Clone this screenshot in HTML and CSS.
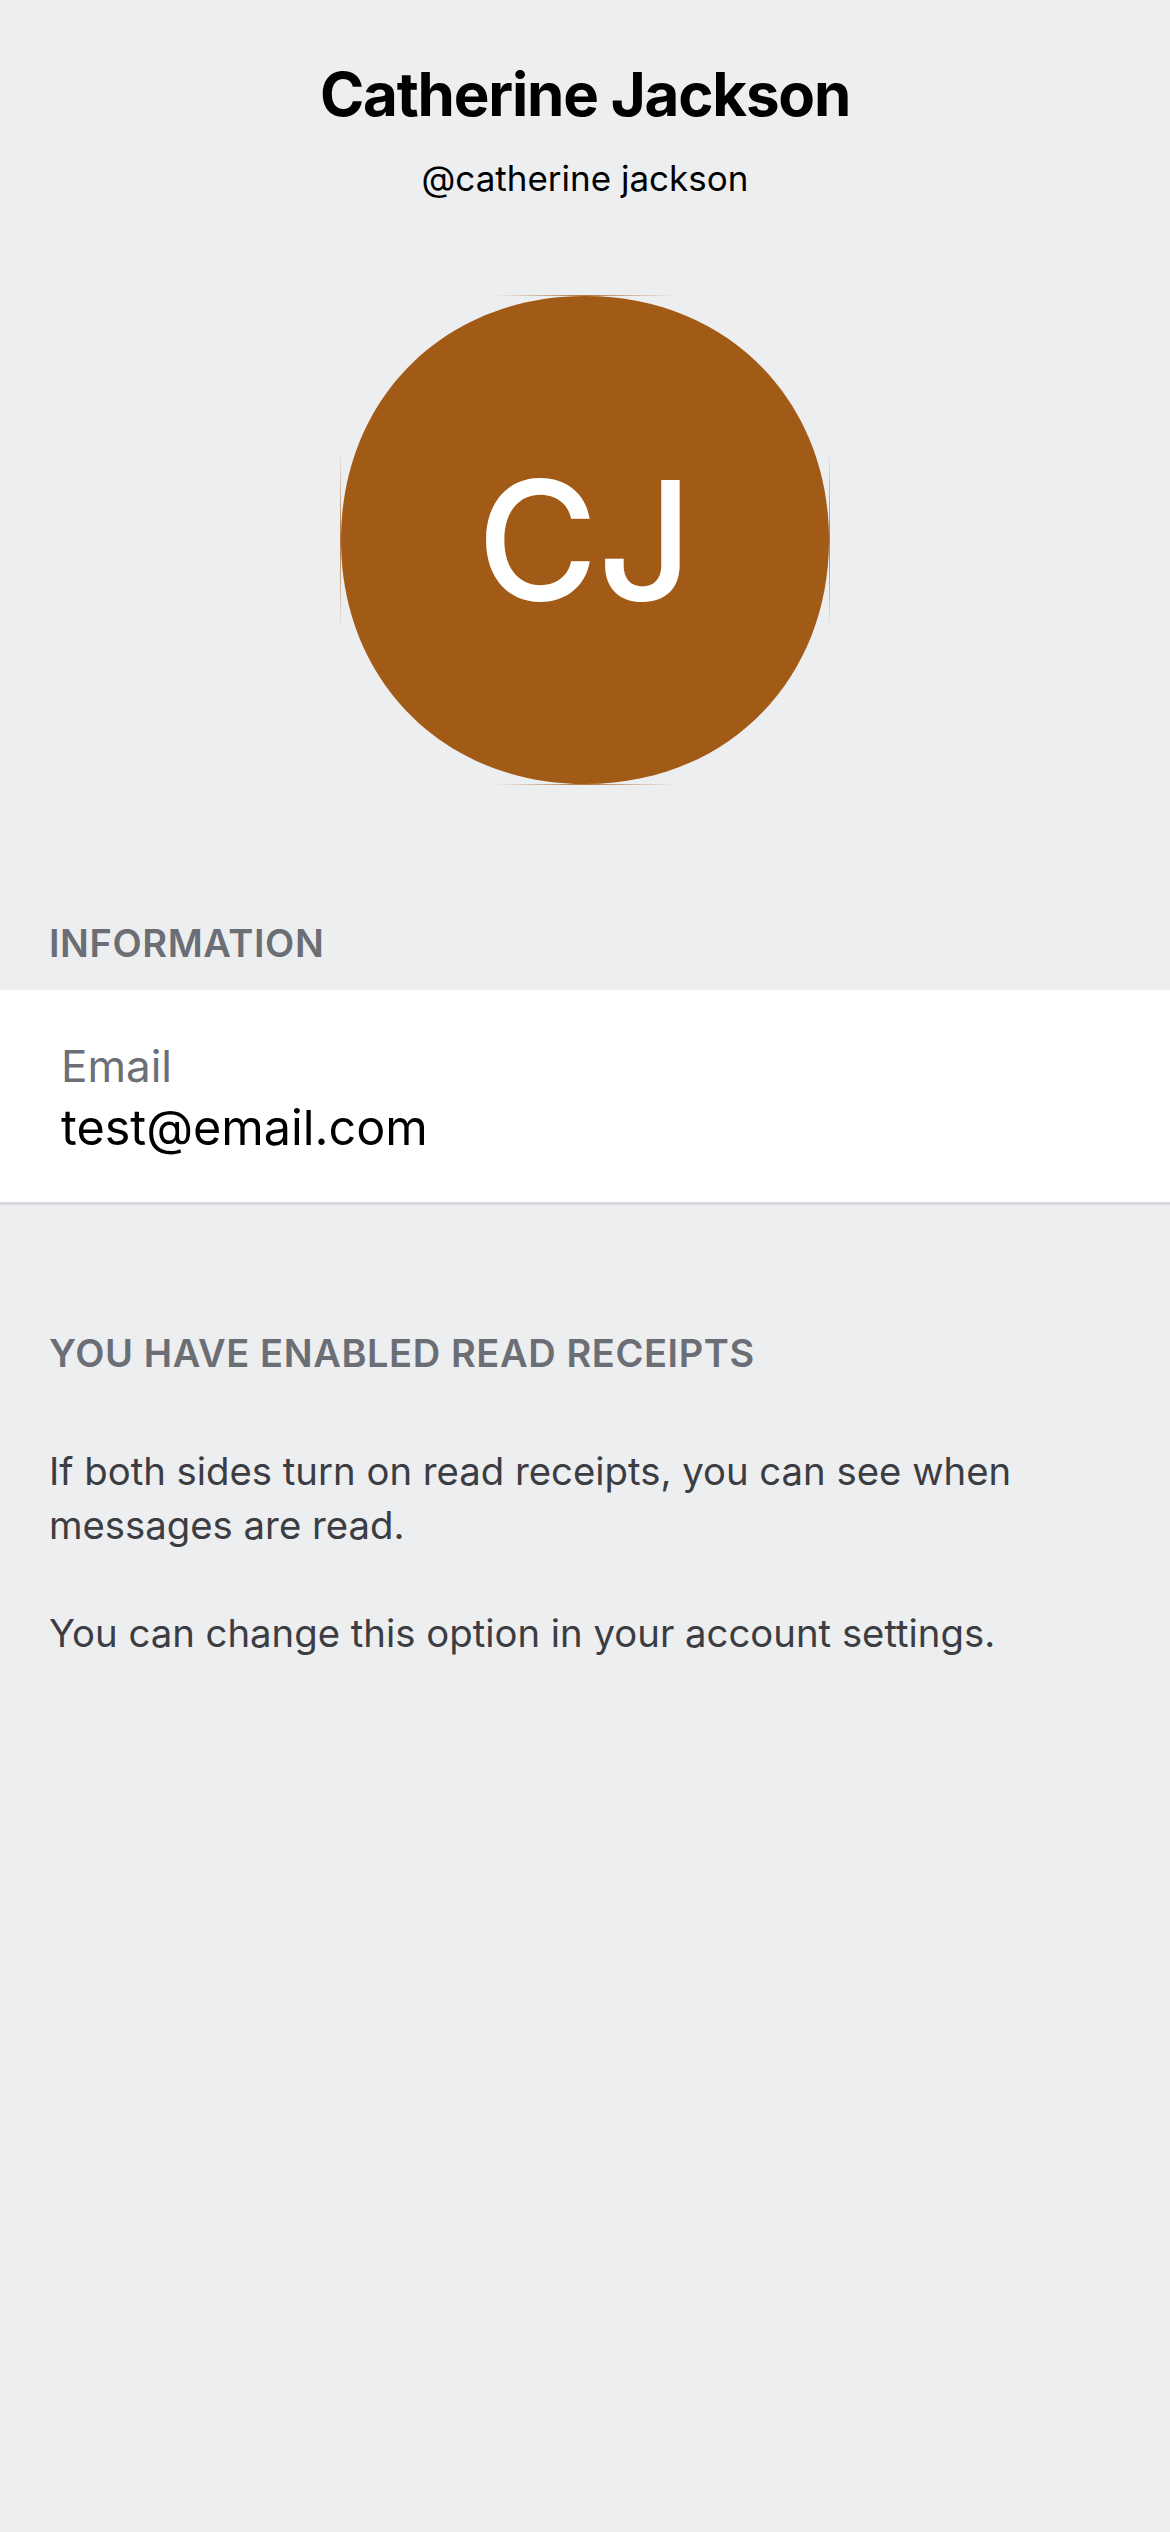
FILE: index.html
```html
<!DOCTYPE html>
<html>
<head>
<meta charset="utf-8">
<link rel="stylesheet" href="styles.css">
</head>
<body>
<div class="screen">
  <header class="header">
    <h1 class="name">Catherine Jackson</h1>
    <div class="handle">@catherine jackson</div>
  </header>
  <div class="avatar">
    <svg class="avatar-bg" viewBox="0 0 490 490" width="490" height="490">
      <defs>
        <linearGradient id="fadeH" x1="0" x2="1" y1="0" y2="0">
          <stop offset="0" stop-color="#a25a17" stop-opacity="0"/>
          <stop offset="0.5" stop-color="#a25a17" stop-opacity="0.8"/>
          <stop offset="1" stop-color="#a25a17" stop-opacity="0"/>
        </linearGradient>
        <linearGradient id="fadeV" x1="0" x2="0" y1="0" y2="1">
          <stop offset="0" stop-color="#a25a17" stop-opacity="0"/>
          <stop offset="0.5" stop-color="#a25a17" stop-opacity="0.8"/>
          <stop offset="1" stop-color="#a25a17" stop-opacity="0"/>
        </linearGradient>
      </defs>
      <path fill="#a25a17" d="M245 1 C386 1 489 104 489 245 C489 386 386 489 245 489 C104 489 1 386 1 245 C1 104 104 1 245 1 Z"/>
      <rect x="155" y="0" width="180" height="1" fill="url(#fadeH)"/>
      <rect x="155" y="489" width="180" height="1" fill="url(#fadeH)"/>
      <rect x="0" y="155" width="1" height="180" fill="url(#fadeV)"/>
      <rect x="489" y="155" width="1" height="180" fill="url(#fadeV)"/>
    </svg>
    <span class="initials">CJ</span>
  </div>
  <div class="section-label info-label">INFORMATION</div>
  <div class="card">
    <div class="field-label">Email</div>
    <div class="field-value">test@email.com</div>
  </div>
  <div class="section-label receipts-label">YOU HAVE ENABLED READ RECEIPTS</div>
  <div class="notes">
    <p>If both sides turn on read receipts, you can see when messages are read.</p>
    <p>You can change this option in your account settings.</p>
  </div>
</div>
</body>
</html>
```
FILE: styles.css
```css
html, body {
  margin: 0;
  padding: 0;
}
body {
  background: #edeef0;
  font-family: "Inter", "Roboto", "Liberation Sans", sans-serif;
  color: #000;
}
.screen {
  width: 1170px;
  min-height: 2532px;
  background: #edeef0;
}
.header {
  padding-top: 56px;
  text-align: center;
}
.name {
  margin: 0;
  font-size: 60px;
  line-height: 76px;
  font-weight: 700;
  letter-spacing: -1.2px;
}
.handle {
  margin-top: 26px;
  font-size: 35px;
  line-height: 40px;
  font-weight: 400;
}
.avatar {
  position: relative;
  width: 490px;
  height: 490px;
  margin: 97px auto 0;
  display: flex;
  align-items: center;
  justify-content: center;
}
.avatar-bg {
  position: absolute;
  left: 0;
  top: 0;
}
.initials {
  position: relative;
  color: #fff;
  font-size: 165px;
  line-height: 1;
  font-weight: 500;
  letter-spacing: 0;
}
.section-label {
  padding-left: 49px;
  font-size: 38px;
  line-height: 46px;
  font-weight: 600;
  letter-spacing: 0.6px;
  color: #6b6e75;
}
.info-label {
  margin-top: 135px;
}
.card {
  margin-top: 24px;
  background: #fff;
  border-bottom: 3px solid #d9dadd;
  padding: 50px 61px 44px;
}
.field-label {
  font-size: 44px;
  line-height: 52px;
  color: #6c6f76;
}
.field-value {
  margin-top: 6px;
  font-size: 48.5px;
  line-height: 60px;
  color: #000;
}
.receipts-label {
  margin-top: 125px;
}
.notes {
  margin-top: 68px;
  padding: 0 49px;
  font-size: 38.3px;
  line-height: 54px;
  color: #3c3d42;
}
.notes p {
  margin: 0 0 54px;
}
```
